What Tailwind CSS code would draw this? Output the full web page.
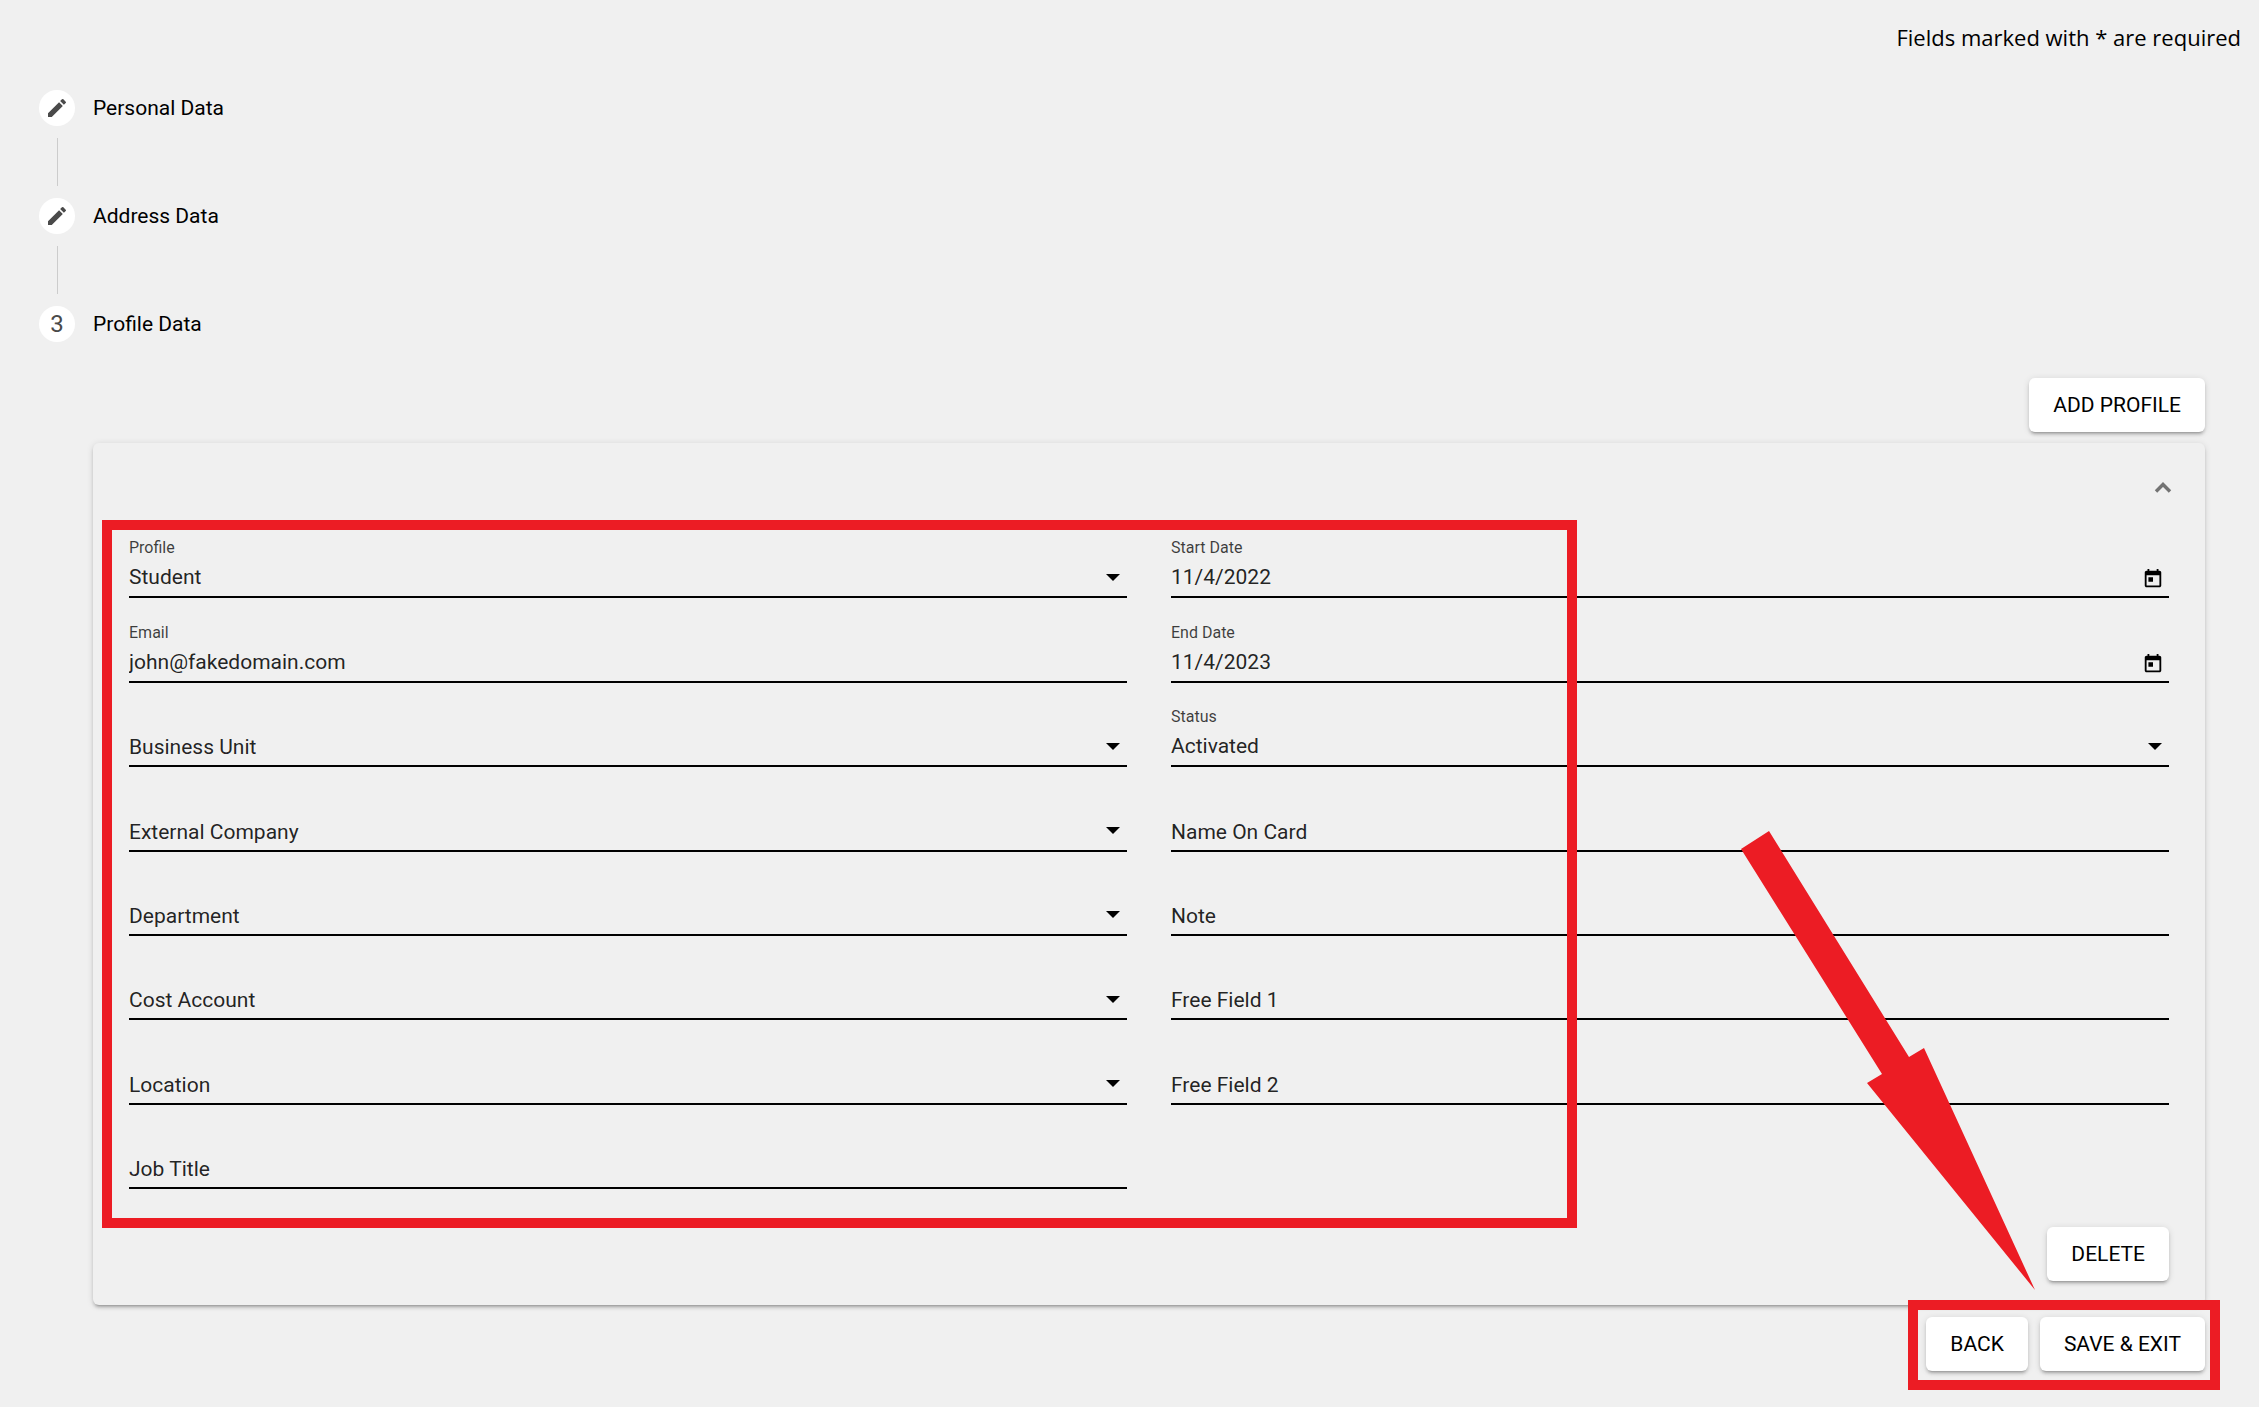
<!DOCTYPE html>
<html lang="en">
<head>
<meta charset="utf-8">
<meta name="viewport" content="width=device-width, initial-scale=1">
<title>Profile Data</title>
<script src="https://cdn.jsdelivr.net/npm/@tailwindcss/browser@4"></script>
</head>
<body class="min-h-screen bg-[#f0f0f0] font-[Roboto,sans-serif] text-[21px] leading-7 text-black/87">
<svg class="hidden">
  <symbol id="pencil" viewBox="0 0 24 24"><path d="M3 17.25V21h3.75L17.81 9.94l-3.75-3.75L3 17.25zM20.71 7.04a1 1 0 0 0 0-1.41l-2.34-2.34a1 1 0 0 0-1.41 0l-1.83 1.83 3.75 3.75 1.83-1.83z"/></symbol>
  <symbol id="arrow" viewBox="0 0 14 7"><path d="M0 0h14L7 7z"/></symbol>
  <symbol id="calendar" viewBox="0 0 24 24"><path d="M19 3h-1V1h-2v2H8V1H6v2H5c-1.11 0-1.99.9-1.99 2L3 19c0 1.1.89 2 2 2h14c1.1 0 2-.9 2-2V5c0-1.1-.9-2-2-2zm0 16H5V8h14v11zM7 10h5v5H7z"/></symbol>
</svg>

<p class="pt-6 pr-[18px] text-right font-[Open_Sans,sans-serif] text-[22px] leading-[26px] text-black">Fields marked with * are required</p>

<main class="pt-10 pr-[54px] pb-9 pl-[39px]">
  <ol>
    <li>
      <div class="flex items-center gap-[18px] text-black">
        <span class="flex size-9 items-center justify-center rounded-full bg-white"><svg class="size-6 fill-[#4a4a4a]"><use href="#pencil"/></svg></span>
        Personal Data
      </div>
      <div class="my-3 ml-[18px] h-12 w-px bg-black/15"></div>
    </li>
    <li>
      <div class="flex items-center gap-[18px] text-black">
        <span class="flex size-9 items-center justify-center rounded-full bg-white"><svg class="size-6 fill-[#4a4a4a]"><use href="#pencil"/></svg></span>
        Address Data
      </div>
      <div class="my-3 ml-[18px] h-12 w-px bg-black/15"></div>
    </li>
    <li class="flex items-center gap-[18px] text-black">
      <span class="flex size-9 items-center justify-center rounded-full bg-white text-2xl text-[#4a4a4a]">3</span>
      Profile Data
    </li>
  </ol>

  <div class="pt-9 pl-[54px]">
    <div class="flex justify-end">
      <button type="button" class="h-[54px] rounded-md bg-white px-6 text-black shadow-[0_4px_2px_-3px_rgba(0,0,0,0.2),0_3px_3px_rgba(0,0,0,0.14),0_1px_7px_rgba(0,0,0,0.12)]">ADD PROFILE</button>
    </div>

    <section class="relative mt-[11px] rounded-md px-9 pb-6 shadow-[0_4px_2px_-3px_rgba(0,0,0,0.2),0_3px_3px_rgba(0,0,0,0.14),0_1px_7px_rgba(0,0,0,0.12)] bg-[#f0f0f0]">
      <div class="flex h-[71px] items-center justify-end pt-5">
        <button type="button" aria-label="Collapse profile" class="h-6"><svg class="size-3 overflow-visible" viewBox="0 0 12 12" fill="none" stroke="#737373" stroke-width="3.4"><path d="M-1 8.5l7-7 7 7"/></svg></button>
      </div>

      <form class="grid grid-cols-2 gap-x-11">
        <div class="grid h-[675px] grid-rows-8">
          <div class="flex flex-col justify-end border-b-2 border-black">
            <label for="profile" class="text-base leading-5 text-black/75">Profile</label>
            <div class="grid items-center">
              <select id="profile" class="col-start-1 row-start-1 h-[38px] w-full appearance-none bg-transparent outline-none"><option>Student</option></select>
              <svg class="pointer-events-none col-start-1 row-start-1 mr-[7px] h-[7px] w-3.5 justify-self-end"><use href="#arrow"/></svg>
            </div>
          </div>
          <div class="flex flex-col justify-end border-b-2 border-black">
            <label for="email" class="text-base leading-5 text-black/75">Email</label>
            <input id="email" type="email" value="john@fakedomain.com" class="h-[38px] w-full bg-transparent outline-none">
          </div>
          <div class="grid content-end items-end border-b-2 border-black">
            <label for="unit" class="col-start-1 row-start-1 leading-9">Business Unit</label>
            <select id="unit" class="col-start-1 row-start-1 h-[38px] w-full appearance-none bg-transparent outline-none"><option></option></select>
            <svg class="pointer-events-none col-start-1 row-start-1 mr-[7px] h-[7px] w-3.5 self-center justify-self-end"><use href="#arrow"/></svg>
          </div>
          <div class="grid content-end items-end border-b-2 border-black">
            <label for="company" class="col-start-1 row-start-1 leading-9">External Company</label>
            <select id="company" class="col-start-1 row-start-1 h-[38px] w-full appearance-none bg-transparent outline-none"><option></option></select>
            <svg class="pointer-events-none col-start-1 row-start-1 mr-[7px] h-[7px] w-3.5 self-center justify-self-end"><use href="#arrow"/></svg>
          </div>
          <div class="grid content-end items-end border-b-2 border-black">
            <label for="department" class="col-start-1 row-start-1 leading-9">Department</label>
            <select id="department" class="col-start-1 row-start-1 h-[38px] w-full appearance-none bg-transparent outline-none"><option></option></select>
            <svg class="pointer-events-none col-start-1 row-start-1 mr-[7px] h-[7px] w-3.5 self-center justify-self-end"><use href="#arrow"/></svg>
          </div>
          <div class="grid content-end items-end border-b-2 border-black">
            <label for="cost" class="col-start-1 row-start-1 leading-9">Cost Account</label>
            <select id="cost" class="col-start-1 row-start-1 h-[38px] w-full appearance-none bg-transparent outline-none"><option></option></select>
            <svg class="pointer-events-none col-start-1 row-start-1 mr-[7px] h-[7px] w-3.5 self-center justify-self-end"><use href="#arrow"/></svg>
          </div>
          <div class="grid content-end items-end border-b-2 border-black">
            <label for="location" class="col-start-1 row-start-1 leading-9">Location</label>
            <select id="location" class="col-start-1 row-start-1 h-[38px] w-full appearance-none bg-transparent outline-none"><option></option></select>
            <svg class="pointer-events-none col-start-1 row-start-1 mr-[7px] h-[7px] w-3.5 self-center justify-self-end"><use href="#arrow"/></svg>
          </div>
          <div class="grid content-end items-end border-b-2 border-black">
            <label for="job" class="col-start-1 row-start-1 leading-9">Job Title</label>
            <input id="job" type="text" class="col-start-1 row-start-1 h-[38px] w-full bg-transparent outline-none">
          </div>
        </div>

        <div class="grid h-[675px] grid-rows-8">
          <div class="flex flex-col justify-end border-b-2 border-black">
            <label for="start" class="text-base leading-5 text-black/75">Start Date</label>
            <div class="flex items-center pr-[5px]">
              <input id="start" type="text" value="11/4/2022" class="h-[38px] min-w-0 flex-1 bg-transparent outline-none">
              <button type="button" aria-label="Pick start date" class="pt-1"><svg class="size-[22px] fill-black"><use href="#calendar"/></svg></button>
            </div>
          </div>
          <div class="flex flex-col justify-end border-b-2 border-black">
            <label for="end" class="text-base leading-5 text-black/75">End Date</label>
            <div class="flex items-center pr-[5px]">
              <input id="end" type="text" value="11/4/2023" class="h-[38px] min-w-0 flex-1 bg-transparent outline-none">
              <button type="button" aria-label="Pick end date" class="pt-1"><svg class="size-[22px] fill-black"><use href="#calendar"/></svg></button>
            </div>
          </div>
          <div class="flex flex-col justify-end border-b-2 border-black">
            <label for="status" class="text-base leading-5 text-black/75">Status</label>
            <div class="grid items-center">
              <select id="status" class="col-start-1 row-start-1 h-[38px] w-full appearance-none bg-transparent outline-none"><option>Activated</option></select>
              <svg class="pointer-events-none col-start-1 row-start-1 mr-[7px] h-[7px] w-3.5 justify-self-end"><use href="#arrow"/></svg>
            </div>
          </div>
          <div class="grid content-end items-end border-b-2 border-black">
            <label for="card" class="col-start-1 row-start-1 leading-9">Name On Card</label>
            <input id="card" type="text" class="col-start-1 row-start-1 h-[38px] w-full bg-transparent outline-none">
          </div>
          <div class="grid content-end items-end border-b-2 border-black">
            <label for="note" class="col-start-1 row-start-1 leading-9">Note</label>
            <input id="note" type="text" class="col-start-1 row-start-1 h-[38px] w-full bg-transparent outline-none">
          </div>
          <div class="grid content-end items-end border-b-2 border-black">
            <label for="free1" class="col-start-1 row-start-1 leading-9">Free Field 1</label>
            <input id="free1" type="text" class="col-start-1 row-start-1 h-[38px] w-full bg-transparent outline-none">
          </div>
          <div class="grid content-end items-end border-b-2 border-black">
            <label for="free2" class="col-start-1 row-start-1 leading-9">Free Field 2</label>
            <input id="free2" type="text" class="col-start-1 row-start-1 h-[38px] w-full bg-transparent outline-none">
          </div>
        </div>
      </form>

      <div class="flex justify-end pt-[38px]">
        <button type="button" class="h-[54px] rounded-md bg-white px-6 text-black shadow-[0_4px_2px_-3px_rgba(0,0,0,0.2),0_3px_3px_rgba(0,0,0,0.14),0_1px_7px_rgba(0,0,0,0.12)]">DELETE</button>
      </div>

      <!-- highlight around the profile fields, and the pointer to the save button -->
      <div class="pointer-events-none absolute top-[77px] right-[628px] left-[9px] h-[708px] border-10 border-[#ec1c24]"></div>
      <svg class="pointer-events-none absolute right-[170px] bottom-[15px] h-[459px] w-[294px]" viewBox="0 0 294 459" fill="#ec1c24"><path d="M28 0L168 226l15-9 111 242L126 252l15-9L0 18z"/></svg>
    </section>

    <div class="mt-3 flex justify-end">
      <div class="relative flex gap-3">
        <button type="button" class="h-[54px] rounded-md bg-white px-6 text-black shadow-[0_4px_2px_-3px_rgba(0,0,0,0.2),0_3px_3px_rgba(0,0,0,0.14),0_1px_7px_rgba(0,0,0,0.12)]">BACK</button>
        <button type="button" class="h-[54px] rounded-md bg-white px-6 text-black shadow-[0_4px_2px_-3px_rgba(0,0,0,0.2),0_3px_3px_rgba(0,0,0,0.14),0_1px_7px_rgba(0,0,0,0.12)]">SAVE &amp; EXIT</button>
        <div class="pointer-events-none absolute -top-[17px] -right-[15px] -bottom-[19px] -left-[18px] border-10 border-[#ec1c24]"></div>
      </div>
    </div>
  </div>
</main>
</body>
</html>
